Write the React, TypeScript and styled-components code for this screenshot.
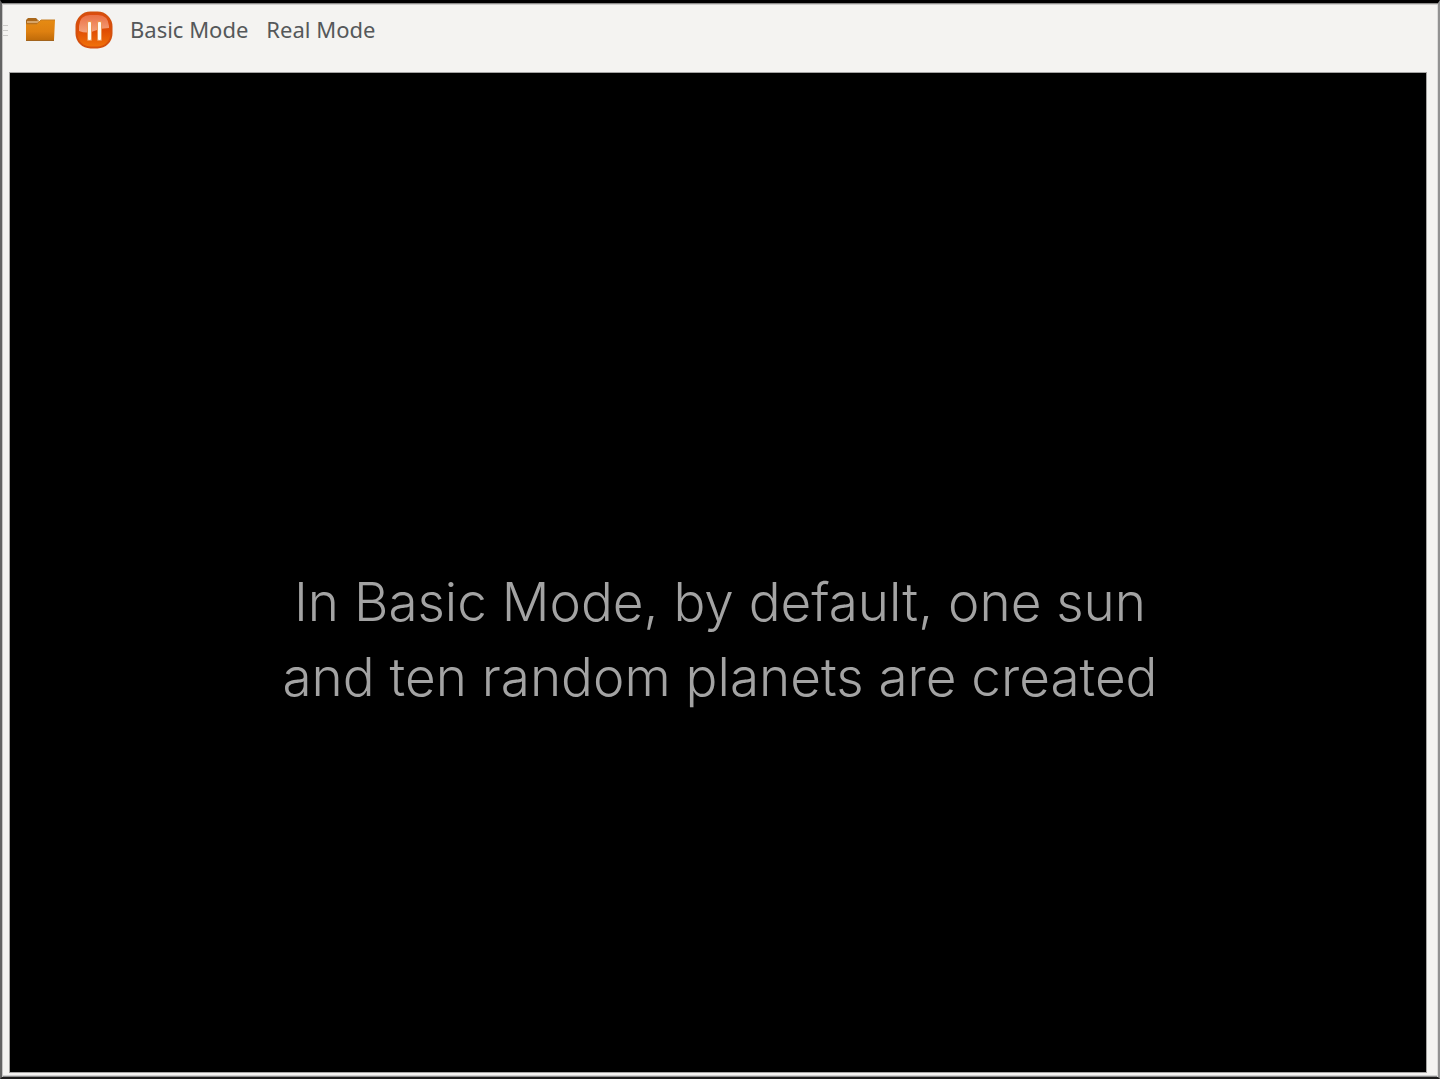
import React from "react";
import styled, { createGlobalStyle } from "styled-components";

const GlobalStyle = createGlobalStyle`
  *, *::before, *::after { box-sizing: border-box; }
  body { margin: 0; background: #f4f3f1; }
`;

const Window = styled.div`
  display: flex;
  flex-direction: column;
  min-height: 100vh;
  padding: 0 12px 0 8px;
  background: #f4f3f1;
  border-style: solid;
  border-width: 3px 2px 2px;
  border-color: #000 #929292 #1c1c1c #636363;
  box-shadow: inset 0 1px #8c8b8a, inset 0 2px #d0cfcd, inset 1px 0 #c6c5c4,
    inset -1px 0 #dddcdb, inset 0 -1px #8b8b8b, inset 0 -2px #d2d2d2;
`;

const Toolbar = styled.div`
  display: flex;
  align-items: center;
  height: 54px;
  margin: 0 0 16px -8px;
`;

const Grip = styled.span`
  display: grid;
  gap: 4px;
  width: 6px;
  margin-right: 13px;
  &::before, &::after { content: ""; }
  &::before, &::after, & > span { height: 1px; background: #cbcac8; }
`;

const ToolButton = styled.button<{ $gap?: number }>`
  display: flex;
  align-items: center;
  padding: 0;
  border: 0;
  margin-right: ${(p) => p.$gap ?? 0}px;
  background: transparent;
  cursor: pointer;
`;

const ModeButton = styled(ToolButton)`
  padding-bottom: 2px;
  color: #55585a;
  font: 22px/30px "Noto Sans", "Open Sans", sans-serif;
  white-space: nowrap;
`;

const Viewport = styled.main`
  flex: 1;
  display: flex;
  align-items: center;
  justify-content: center;
  margin-bottom: 5px;
  padding: 134px 0 0 4px;
  background: #000;
  box-shadow: 0 0 0 1px #a5a4a3;
`;

const Caption = styled.p`
  margin: 0;
  color: #a3a3a3;
  font: 300 53px/75px Inter, "Open Sans", sans-serif;
  text-align: center;
`;

const FolderIcon = () => (
  <svg width="38" height="30" viewBox="0 0 38 30" aria-hidden="true">
    <defs>
      <linearGradient id="folder" x1="0" y1="0" x2="0" y2="1">
        <stop offset="0" stopColor="#e68b13" />
        <stop offset="0.55" stopColor="#de8010" />
        <stop offset="1" stopColor="#bd6909" />
      </linearGradient>
    </defs>
    <path d="M5 7V5l2-2h8l3 3h14v5H5z" fill="#a9671b" />
    <path d="M6 7h10l2-1" fill="none" stroke="#d6a468" strokeWidth="2" />
    <path d="M5 9h11l4-4h14l-1 20q0 1-1 1H6q-1 0-1-1z" fill="url(#folder)" />
    <path d="M5 9h11l4-4h14" fill="none" stroke="#c77d20" strokeWidth="1" />
    <path d="M5 25.5h28" stroke="#a3641d" strokeWidth="1" />
  </svg>
);

const PauseIcon = () => (
  <svg width="38" height="38" viewBox="0 0 38 38" aria-hidden="true">
    <defs>
      <linearGradient id="pause" x1="0" y1="0" x2="0" y2="1">
        <stop offset="0" stopColor="#dc4a10" />
        <stop offset="0.5" stopColor="#df4c03" />
        <stop offset="1" stopColor="#f1730b" />
      </linearGradient>
      <linearGradient id="gloss" x1="0" y1="0" x2="0" y2="1">
        <stop offset="0" stopColor="#ea7044" />
        <stop offset="1" stopColor="#f4a17a" />
      </linearGradient>
    </defs>
    <rect x="1.5" y="1.5" width="35" height="35" rx="14" fill="url(#pause)" stroke="#d4500e" strokeWidth="2" />
    <path d="M4 20V15Q5 4 15 4h8q10 0 11 11v2q-8 0-15 3t-15 0z" fill="url(#gloss)" />
    <rect x="12" y="10" width="5" height="20" rx="1" fill="#ed9553" />
    <rect x="22" y="10" width="5" height="20" rx="1" fill="#ed9553" />
    <rect x="13" y="11" width="3" height="18" rx="1" fill="#fffaf0" />
    <rect x="23" y="11" width="3" height="18" rx="1" fill="#fffaf0" />
  </svg>
);

export default function App() {
  return (
    <>
      <GlobalStyle />
      <Window>
        <Toolbar role="toolbar" aria-label="Simulation">
          <Grip aria-hidden="true"><span /></Grip>
          <ToolButton type="button" aria-label="Open" $gap={16}><FolderIcon /></ToolButton>
          <ToolButton type="button" aria-label="Pause" $gap={17}><PauseIcon /></ToolButton>
          <ModeButton type="button" $gap={18}>Basic Mode</ModeButton>
          <ModeButton type="button">Real Mode</ModeButton>
        </Toolbar>
        <Viewport>
          <Caption>
            In Basic Mode, by default, one sun
            <br />
            and ten random planets are created
          </Caption>
        </Viewport>
      </Window>
    </>
  );
}
